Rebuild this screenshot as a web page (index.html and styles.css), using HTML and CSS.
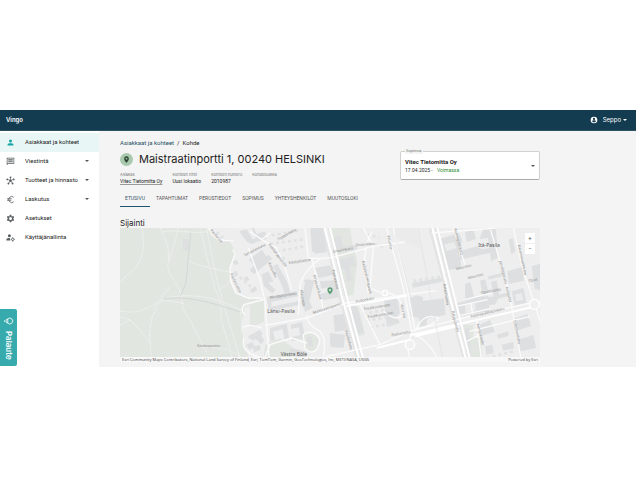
FILE: index.html
```html
<!DOCTYPE html>
<html lang="fi">
<head>
<meta charset="utf-8">
<title>Vingo</title>
<link rel="stylesheet" href="styles.css">
</head>
<body>
<header class="topbar">
  <span class="brand">Vingo</span>
  <button class="user" type="button">
    <svg class="user-icon" viewBox="0 0 24 24"><path fill-rule="evenodd" d="M12 2a10 10 0 1 0 0 20 10 10 0 0 0 0-20zm0 3a3.500 3.500 0 1 1 0 7 3.500 3.500 0 0 1 0-7zm-6 11c0-2 4-3 6-3s6 1 6 3c-1.300 2-3.500 3.200-6 3.200S7.300 18 6 16z"/></svg>
    <span>Seppo</span>
    <svg class="user-caret" viewBox="0 0 10 5"><path d="M0 0h10L5 5z"/></svg>
  </button>
</header>
<div class="shell">
  <nav class="sidebar">
    <a class="item active" href="#"><svg class="icon" viewBox="0 0 24 24"><path d="M12 12a4 4 0 1 0 0-8 4 4 0 0 0 0 8zm0 2c-2.700 0-8 1.300-8 4v2h16v-2c0-2.700-5.300-4-8-4z"/></svg><span>Asiakkaat ja kohteet</span></a>
    <a class="item" href="#"><svg class="icon" viewBox="0 0 24 24"><path fill-rule="evenodd" d="M2 2h20v16H6l-4 4zm2 2v13l1.500-1H20V4zm2 2h12v2H6zm0 3h12v2H6zm0 3h12v2H6z"/></svg><span>Viestintä</span><svg class="caret" viewBox="0 0 10 5"><path d="M0 0h10L5 5z"/></svg></a>
    <a class="item" href="#"><svg class="icon" viewBox="0 0 24 24"><path d="M12 12V4M12 12l8-3M12 12l5 8M12 12l-5 8M12 12L4 9" fill="none" stroke="currentColor" stroke-width="1.600"/><circle cx="12" cy="12.500" r="3.500"/><circle cx="12" cy="3.500" r="2.500"/><circle cx="20.500" cy="9" r="2.500"/><circle cx="17.500" cy="20" r="2.500"/><circle cx="6.500" cy="20" r="2.500"/><circle cx="3.500" cy="9" r="2.500"/></svg><span>Tuotteet ja hinnasto</span><svg class="caret" viewBox="0 0 10 5"><path d="M0 0h10L5 5z"/></svg></a>
    <a class="item" href="#"><svg class="icon" viewBox="0 0 24 24"><path d="M20.500 6A8 8 0 1 0 20.500 18M3 10h12M3 14h11" fill="none" stroke="currentColor" stroke-width="2.200"/></svg><span>Laskutus</span><svg class="caret" viewBox="0 0 10 5"><path d="M0 0h10L5 5z"/></svg></a>
    <a class="item" href="#"><svg class="icon" viewBox="0 0 24 24"><circle cx="12" cy="12" r="5.500" fill="none" stroke="currentColor" stroke-width="3"/><path d="M10 2h4l1 4H9zM10 22h4l1-4H9zM2.300 8.700l2-3.400 4 1.200-3 5.200zM21.700 8.700l-2-3.400-4 1.200 3 5.200zM2.300 15.300l2 3.400 4-1.200-3-5.200zM21.700 15.300l-2 3.400-4-1.200 3-5.200z"/></svg><span>Asetukset</span></a>
    <a class="item" href="#"><svg class="icon" viewBox="0 0 24 24"><circle cx="9" cy="7" r="4"/><path d="M1 20v-3c0-3 5-4 10-4-1 2-1 5 1 7z"/><circle cx="18" cy="17" r="3.200" fill="none" stroke="currentColor" stroke-width="2.400"/><path d="M17 11h2v2h-2zM17 21h2v2h-2zM12 16h2v2h-2zM22 16h2v2h-2z"/></svg><span>Käyttäjänallinta</span></a>
  </nav>
  <main class="content">
    <div class="crumbs"><a href="#">Asiakkaat ja kohteet</a><span>/</span><span>Kohde</span></div>
    <div class="summary">
      <div class="place">
        <div class="title">
          <span class="badge"><svg viewBox="0 0 24 24"><path fill-rule="evenodd" d="M12 1a8 8 0 0 0-8 8c0 6 8 14 8 14s8-8 8-14a8 8 0 0 0-8-8zm0 5a3 3 0 1 1 0 6 3 3 0 0 1 0-6z"/></svg></span>
          <h1>Maistraatinportti 1, 00240 HELSINKI</h1>
        </div>
        <dl class="facts">
          <div><dt>Asiakas</dt><dd><a href="#">Vitec Tietomitta Oy</a></dd></div>
          <div><dt>Kohteen nimi</dt><dd>Uusi lokaatio</dd></div>
          <div><dt>Kohteen numero</dt><dd>2010987</dd></div>
          <div><dt>Kohdeluokka</dt></div>
        </dl>
      </div>
      <button class="contract" type="button" aria-labelledby="contract-label contract-name">
        <span class="contract-label" id="contract-label">Sopimus</span>
        <span class="contract-text"><strong id="contract-name">Vitec Tietomitta Oy</strong><span class="contract-date">17.04.2025 - <em>Voimassa</em></span></span>
        <svg class="caret" viewBox="0 0 10 5"><path d="M0 0h10L5 5z"/></svg>
      </button>
    </div>
    <nav class="tabs">
      <a class="tab current" href="#">ETUSIVU</a><a class="tab" href="#">TAPAHTUMAT</a><a class="tab" href="#">PERUSTIEDOT</a><a class="tab" href="#">SOPIMUS</a><a class="tab" href="#">YHTEYSHENKILÖT</a><a class="tab" href="#">MUUTOSLOKI</a>
    </nav>
    <h2>Sijainti</h2>
    <div class="map">
      <svg class="map-art" viewBox="0 0 1260 402" preserveAspectRatio="xMidYMid slice">
        <!-- parks -->
        <g class="park">
          <path d="M0 0H265L272 22 300 42 330 38 348 78 332 120V160L344 190 372 208H420V222L375 240 362 300 370 330 390 402H0z"/>
          <path d="M630 0H690L698 50 712 100 700 200 672 205 650 90z"/>
          <path d="M390 208L432 220V280L390 300z"/>
          <path d="M545 330C560 305 595 315 597 340 597 365 570 382 555 365z"/>
          <path d="M435 350L480 330 520 360 515 402H430z"/>
          <path d="M682 230L715 235 735 320 705 325z"/>
          <path d="M1030 290H1060V330H1085V390H1045z"/>
          <path d="M800 0H890L905 60 850 40z" opacity=".3"/>
        </g>
        <!-- paths through the park -->
        <g class="trail" transform="translate(-15 -9)">
          <path d="M80 9C90 60 85 100 60 130L15 170M135 9C150 40 165 70 160 110 150 150 190 170 200 215 200 250 210 270 230 290 240 330 262 345 275 385M190 9C180 60 165 90 160 115M15 258C80 270 100 245 150 220 210 205 300 210 375 255L430 222M110 400C100 330 100 270 140 228 190 225 220 245 200 232M15 300L45 285 15 275M45 285C80 320 95 340 108 355M255 9C265 50 280 120 300 190L320 240C310 300 340 330 350 400M275 9L300 140 325 235 375 400M220 105C250 125 300 130 345 142M310 195Q345 180 348 150M165 185L110 255M140 22C190 10 240 30 280 18M375 255L385 320M262 368Q320 360 380 395"/>
        </g>
        <path class="ditch" d="M212 15L198 165 182 203M130 213C200 202 270 222 360 252"/>
        <!-- buildings -->
        <g class="block">
          <path d="M189 34h17v33h-17zM571 0h40l10 72-35 5-10-8z"/>
          <path d="M585 120l45-8 12 28-45 10zM600 160l55-5 15 50-60 12-8-20 35-8-4-12-30 5zM640 262l35-5 12 48-42 6zM630 315l45 5-4 40-40-3z"/>
          <path d="M555 162q-10-5 8-8l20 5-15 60 10 20-22 12-12-25zM395 92l20-12 10 12 20-12 12 12-45 35zM425 140l20-10 15 30-15 5 22 20-10 12-25-22zM460 115l12-8 32 60 8 38-14 4-10-30zM440 208l90-18 4 14-80 18v14l80-16 3 12-90 16z"/>
          <path d="M450 300l50-13 8 45-14 3-7-32-28 8 6 25-14 4zM512 290l35-8 8 50-40 8 0-14 26-4-5-24-22 5zM395 320l20-8 18 25-10 12zM400 355l20-5 2 15-20 8zM512 360l50 12-4 20-48-12zM560 330l14-5 5 28-15 4z"/>
          <path d="M358 10l22-6 18 30 35-12 8 10-48 16-14-8zM402 0l8 18 24-8 5 10-30 12-14-32zM386 95l40-30 22 35-45 38-14-10 14-18zM338 100l12-5 6 12-12 5zM370 150l12-5 6 10-10 5zM340 132l10-4 4 14-10 4zM390 185l16-10 6 12-16 8z"/>
          <path d="M640 30l22-7 8 32 38-5 4 14-58 8zM660 95l40-12 8 30-20 3 10 40-16 4-10-40-8 2zM690 230l20 4 22 80-18 2z"/>
          <path d="M792 215l40-8 8 50-10 8 9 20-38 12zM870 210l20-8 18 5 2 12 62-8 5 50-55 10-4 30-18-4-4-28-24-4zM876 165l100-18 2 12-100 20z"/>
          <path d="M960 32l55-16 12 20-10 38 8 45-40 8zM1035 12l25-6 8 26-28 10zM1020 70l50-15 18 10 3 14-70 16zM1090 0h38l5 90-20 10-3-25-32 6-4-14 34-7-4-30-25 4zM1166 35l12-5 8 40-12 10zM1035 168l16-5 12 45 25-8-8-42 16-4 10 45-30 14 45-8-8-44 17-4 8 48-12 24-90 12zM1010 225l95-22 4 45-89 18-17-20zM1162 130l45-14 5 42-45 10zM1105 145l50-12v10l-50 12zM1175 190l35-10 10 46-35 8zM1120 205l45-12 2 10-42 12zM1235 115l25-8v80l-16-5zM1035 300h12l5 80-12 4zM1080 290l30-14 15 35-40 12zM1180 272l42-14 12 36-45 14zM1192 335l48-14 8 38-50 12zM1130 320l35-10v14l-30 8zM1145 350l36-8v20l-32 5zM1095 355l22-5 4 25-22 5z"/>
          <path d="M385 325l35-20 8 15-30 18zM378 350l20-8 6 16-16 8z"/>
        </g>
        <path class="cutout" d="M972 50l30-8 8 18-30 10zM1185 200l20-5 4 20-20 5zM1035 232l30-7 2 24-30 6z"/>
        <!-- small houses -->
        <path class="houses" d="M290 12l35 32M455 22l90-16M450 48l100-14M470 70l85-15M740 20l38 8M745 45l50 12M470 84l25 8M345 135l52 45M385 330l30-16M730 258l90-16M740 278l86-14M750 298l86-14M880 159l100-16M1100 390l80-20"/>
        <!-- streets -->
        <g class="street-edge"><path d="M610 0L662 215 715 402M628 0L680 210 728 402M930 0L1005 290 1035 402M948 0L1022 290 1052 402"/></g>
        <g class="street">
          <path d="M265 0Q290 44 340 38M338 65L345 78 330 120 332 160 348 195 385 210H425M385 60L420 155 435 220 448 402M390 10L425 35 470 60 492 108 515 185M555 0L565 90 600 92M425 35L450 15M535 260L540 170Q550 130 600 92L640 88 760 55 855 42M575 90L590 150 610 245M435 292L560 270 680 225 860 200 950 188M620 385L780 350 870 310 1010 275 1230 225 1260 220M560 262Q560 290 600 310 620 330 610 385M430 402L450 350 515 330 560 345M720 230L780 350M755 10Q730 60 735 120L745 195M730 0L760 55 750 180 785 195M800 0L850 180 875 310M820 0L862 180 885 310M1000 0L1035 110M1110 0L1165 185 1185 290 1205 402M1180 0L1210 130 1245 230M1070 275L1085 402M935 15L1130 0M1245 230L1260 280M1048 310L1230 265M370 300Q380 285 425 300M375 260Q360 250 372 230L430 215M372 330Q360 375 425 390M885 310Q910 250 955 270 950 290 890 302M875 315Q845 400 900 402M880 315Q940 350 955 402M790 190Q845 200 850 250 840 290 790 250M1040 340L1080 320M1035 215L1115 195"/>
          <path d="M550 320Q580 300 600 335 590 390 555 362zM1008 235l95-20M1020 262l92-20M1052 225l6 32"/>
        </g>
        <g class="road"><path d="M614 0L668 215 720 402M630 0L680 205 732 402M937 0L1010 290 1040 402M952 0L1024 290 1052 402M680 234L860 203M870 322L1235 238M770 360L870 335M885 325L1010 295"/><circle cx="1243" cy="229" r="15"/><circle cx="795" cy="195" r="8"/><circle cx="870" cy="350" r="14"/></g>
        <path class="lane" d="M895 0L935 225 970 402M825 20L890 280"/>
        <!-- street names -->
        <g class="names">
          <text transform="translate(270 8) rotate(48)">Pasilantie</text>
          <text transform="translate(330 138) rotate(64)">Pasilanraitio</text>
          <text transform="translate(374 85) rotate(-27)">Sairaalankatu</text>
          <text transform="translate(445 50) rotate(53)">Pasilan puistotie</text>
          <text transform="translate(475 38) rotate(-30)">Topparikatu</text>
          <text transform="translate(444 105) rotate(65)">Kotipolku</text>
          <text transform="translate(506 108) rotate(-8)">Käsityöläistie</text>
          <text transform="translate(450 212) rotate(-9)">Windgatsinkatu</text>
          <text transform="translate(540 187) rotate(80)">Plautintie</text>
          <text transform="translate(580 142) rotate(75)">Kirjapajankatu</text>
          <text transform="translate(636 126) rotate(77)">Pasilankatu</text>
          <text transform="translate(580 258) rotate(-18)">Maistraatinportti</text>
          <text transform="translate(640 75) rotate(-11)">Ilmarinkatu</text>
          <text transform="translate(708 55) rotate(-5)">Ilmarykatu</text>
          <text transform="translate(726 100) rotate(77)">Radanrakentajantie</text>
          <text transform="translate(802 22) rotate(79)">Veturitie</text>
          <text transform="translate(708 225) rotate(-12)">Firdonkatu</text>
          <text transform="translate(733 247) rotate(-10)">Fredikanterassi</text>
          <text transform="translate(743 271) rotate(-10)">Fredikanterassi</text>
          <text transform="translate(675 308) rotate(75)">Pasilankatu</text>
          <text transform="translate(815 325) rotate(-10)">Pasilansilta</text>
          <text transform="translate(842 228) rotate(79)">Veturitie</text>
          <text transform="translate(970 168) rotate(82)">Ratapihantie</text>
          <text transform="translate(995 250) rotate(76)">Ratapihantie</text>
          <text transform="translate(1002 2) rotate(76)">Asemapäällikkö</text>
          <text transform="translate(1008 127) rotate(-14)">Veturitori</text>
          <text transform="translate(1044 154) rotate(-14)">Veturitori</text>
          <text transform="translate(1083 198) rotate(-10)">Opastinsilta</text>
          <text transform="translate(1052 269) rotate(-13)">Asemapäällikönkatu</text>
          <text transform="translate(1138 100) rotate(76)">Junailijankatu</text>
          <text transform="translate(1157 178) rotate(76)">Kellosilta</text>
          <text transform="translate(1193 52) rotate(77)">Ratamestarinkatu</text>
          <text transform="translate(1180 278) rotate(78)">Lokomonkatu</text>
          <text transform="translate(1070 288) rotate(76)">Kumpulantie</text>
          <text transform="translate(1226 162) rotate(-10)">Opas</text>
          <text transform="translate(232 358)">Keskuspuisto</text>
        </g>
        <g class="districts"><text x="442" y="254">Länsi-Pasila</text><text x="482" y="385">Västra Böle</text><text x="1075" y="58">Itä-Pasila</text></g>
        <path class="pin" fill-rule="evenodd" d="M630 178a8 8 0 0 0-8 8c0 6 8 13 8 13s8-7 8-13a8 8 0 0 0-8-8zm0 5a3 3 0 1 1 0 6 3 3 0 0 1 0-6z"/>
      </svg>
      <div class="zoom"><button type="button" aria-label="Lähennä">+</button><button type="button" aria-label="Loitonna">−</button></div>
      <div class="credits"><span>Esri Community Maps Contributors, National Land Survey of Finland, Esri, TomTom, Garmin, GeoTechnologies, Inc, METI/NASA, USGS</span><span>Powered by Esri</span></div>
    </div>
  </main>
  <button class="feedback" type="button"><svg viewBox="0 0 24 24"><path d="M9 7a7 7 0 1 1 0 10l-4-2V9zM1 10v4M9 7v10"/></svg><span>Palaute</span></button>
</div>
</body>
</html>
```
FILE: styles.css
```css
* { box-sizing: border-box; }
body { margin: 0; padding-top: 110px; background: #fff; color: #222; font: 6px/8px Roboto, "Liberation Sans", sans-serif; }
a { color: inherit; text-decoration: none; }
button { font: inherit; color: inherit; border: 0; padding: 0; background: none; }
svg { display: block; flex: none; fill: currentColor; }

.topbar { display: flex; align-items: center; justify-content: space-between; height: 21px; padding: 0 9px 0 6px; background: #143c50; color: #fff; border-bottom: 1px solid #2b5265; font-family: Inter, sans-serif; }
.brand { font-weight: 600; }
.user { display: flex; align-items: center; gap: 5px; }
.user-icon { width: 8px; height: 8px; }
.user-caret { width: 4px; height: 2px; margin-left: -3px; }

.shell { position: relative; display: flex; }
.sidebar { flex: none; width: 99px; padding-top: 2px; background: #fff; }
.item { display: flex; align-items: center; height: 19px; padding: 0 10px 1px 6px; }
.item span { flex: 1; margin-left: 10px; white-space: nowrap; }
.item.active { background: #e8f7f6; }
.icon { width: 9px; height: 9px; color: #5a5f62; }
.active .icon { color: #18a5a5; }
.caret { width: 4px; height: 2px; color: #555; }

.content { flex: 1; min-width: 0; padding: 8px 96px 5px 21px; background: #f4f4f4; }
.crumbs { display: flex; gap: 3px; }
.crumbs a { color: #1d5064; }
.summary { display: flex; justify-content: space-between; align-items: flex-start; }
.title { display: flex; align-items: center; gap: 6px; height: 24px; }
.badge { display: flex; align-items: center; justify-content: center; width: 13px; height: 13px; border-radius: 50%; background: #a8c9ae; color: #2b4435; }
.badge svg { width: 7px; height: 7px; }
h1 { margin: 0; font: 400 11px/16px Inter, sans-serif; white-space: nowrap; }
.facts { display: flex; gap: 10px; margin: 0; white-space: nowrap; }
.facts dt { font: 4px/7px Inter, sans-serif; color: #777; }
.facts dd { margin: 0; font-size: 5px; line-height: 7px; }
.facts dd a { text-decoration: underline #999; }
.contract { position: relative; display: flex; align-items: center; justify-content: space-between; width: 140px; height: 29px; margin-top: 4px; padding: 0 4px; border: 1px solid #d0d0d0; border-bottom-color: #aaa; border-radius: 2px; background: #fff; text-align: left; }
.contract-label { position: absolute; left: 4px; top: -4px; padding: 0 1px; font-size: 4px; line-height: 6px; color: #777; background: #f4f4f4; }
.contract-text { display: flex; flex-direction: column; font-size: 5px; }
.contract-text strong { font-size: 6px; font-weight: 700; }
.contract-date em { margin-left: 3px; font-style: normal; color: #1f8a2e; }

.tabs { display: flex; gap: 1px; margin-top: 6px; font-size: 5px; color: #555; }
.tab { height: 16px; padding: 0 5px; line-height: 15px; white-space: nowrap; }
.tab.current { border-bottom: 1px solid #1f5570; color: #33586b; }
h2 { margin: 11px 0 0; font: 400 8px/10px Inter, sans-serif; }

.map { position: relative; height: 134px; background: #eee; overflow: hidden; }
.map-art { width: 100%; height: 100%; }
.park { fill: #e1e6e1; }
.trail { fill: none; stroke: #f2f4f1; stroke-width: 3; stroke-dasharray: 4 2; }
.ditch { fill: none; stroke: #d3d8d4; stroke-width: 3; }
.block { fill: #dddfe0; }
.cutout { fill: #ececec; }
.houses { fill: none; stroke: #e1e2e2; stroke-width: 8; stroke-dasharray: 9 9; }
.street { fill: none; stroke: #fbfbfb; stroke-width: 4; }
.street-edge { fill: none; stroke: #e4e4e4; stroke-width: 9; }
.road { fill: none; stroke: #fff; stroke-width: 6; }
.road circle { fill: #f0f0f0; stroke-width: 4; }
.lane { fill: none; stroke: #e1e1e1; stroke-width: 2; }
.names { font: 11px "Noto Sans", sans-serif; fill: #888; }
.districts { font: 15px "Noto Sans", sans-serif; fill: #555; }
.pin { fill: #5f9f76; }
.zoom { position: absolute; top: 5px; right: 5px; display: flex; flex-direction: column; gap: 1px; color: #555; }
.zoom button { width: 10px; height: 10px; background: #fff; line-height: 10px; }
.credits { position: absolute; left: 0; right: 0; bottom: 0; display: flex; justify-content: space-between; padding: 0 2px; font: 4px/5px "Open Sans", sans-serif; color: #444; background: #f8f8f8; white-space: nowrap; }

.feedback { position: absolute; left: 0; bottom: 1px; display: flex; align-items: center; justify-content: center; gap: 5px; width: 17px; height: 57px; writing-mode: vertical-rl; border-radius: 0 2px 2px 0; background: #36aaad; color: #fff; font: 600 8px/10px Inter, sans-serif; }
.feedback svg { width: 10px; height: 10px; fill: none; stroke: currentColor; stroke-width: 2; }
```
